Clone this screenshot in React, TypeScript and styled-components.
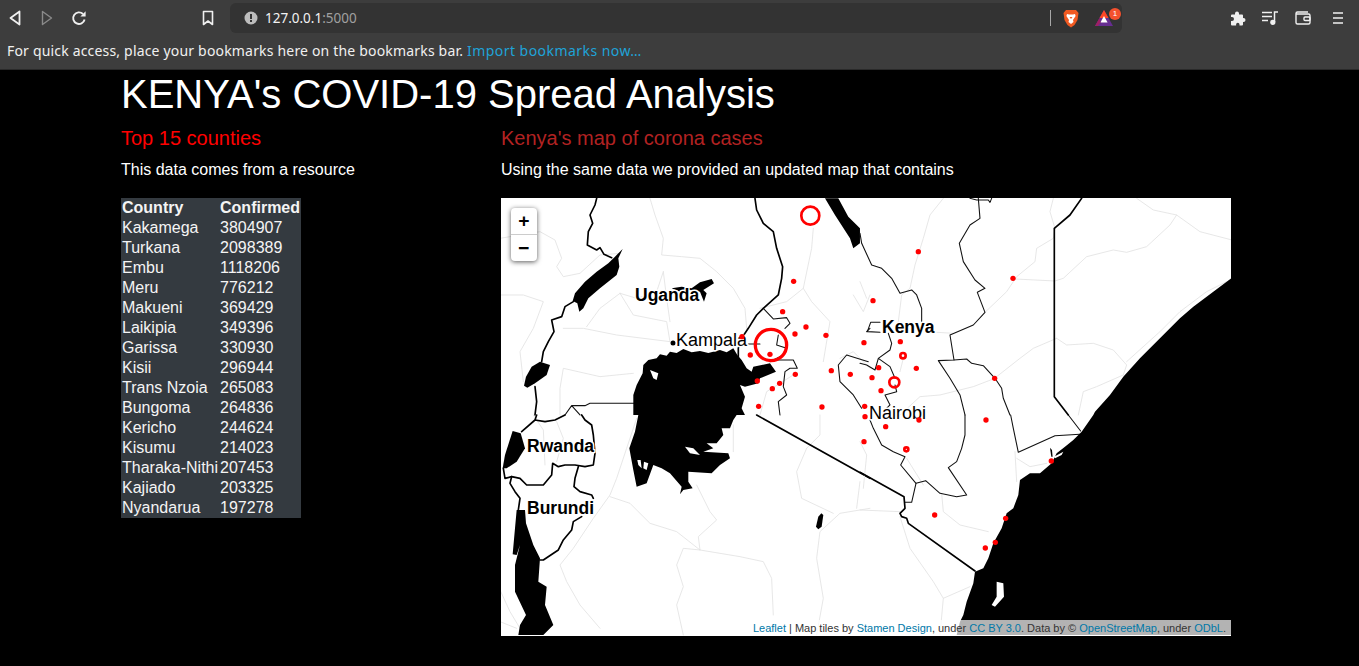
import React from 'react'
import styled, { createGlobalStyle } from 'styled-components'

const GlobalStyle = createGlobalStyle`
  html, body {
    margin: 0;
    height: 100%;
    background: #000;
    overflow: hidden;
    font-family: "Liberation Sans", Arial, sans-serif;
  }
`

const Chrome = styled.div`
  height: 69px;
  background: #3d3d3d;
  border-bottom: 1px solid #2a2a2a;
  font-family: "Noto Sans", sans-serif;
`

const Toolbar = styled.div`
  height: 36px;
  display: flex;
  align-items: center;
`

const IconSlot = styled.div<{ $width?: number; $dim?: boolean }>`
  width: ${({ $width }) => $width || 32}px;
  height: 36px;
  flex: none;
  display: flex;
  align-items: center;
  justify-content: center;
  color: ${({ $dim }) => ($dim ? '#8a8a8a' : '#f0f0f0')};
`

const NavGroup = styled.div`
  display: flex;
  width: 193px;
  margin-left: -1px;
`

const UrlBar = styled.div`
  width: 892px;
  height: 30px;
  margin: 0 100px 0 6px;
  flex: none;
  background: #333333;
  border-radius: 6px;
  display: flex;
  align-items: center;
  padding: 0 0 0 14px;
  box-sizing: border-box;
  font-size: 13.5px;
  color: #f2f2f2;
`

const UrlHost = styled.span`
  margin-left: 7px;
`

const UrlPort = styled.span`
  color: #a0a0a0;
  flex: 1;
`

const UrlDivider = styled.div`
  width: 1px;
  height: 16px;
  background: #a8a8a8;
`

const ShieldSlot = styled.div`
  width: 38px;
  padding-left: 1px;
  box-sizing: border-box;
  display: flex;
  justify-content: center;
`

const RewardSlot = styled.div`
  position: relative;
  width: 30px;
  margin-right: 3px;
  display: flex;
  justify-content: center;
`

const Badge = styled.span`
  position: absolute;
  top: -2px;
  right: -2px;
  width: 12px;
  height: 12px;
  border-radius: 50%;
  background: #f4512e;
  color: #fff;
  font-size: 8px;
  line-height: 12px;
  text-align: center;
  font-family: "Liberation Sans", sans-serif;
`

const ActionGroup = styled.div`
  display: flex;
`

const BookmarkBar = styled.div`
  height: 33px;
  padding: 0 0 4px 7px;
  box-sizing: border-box;
  display: flex;
  align-items: center;
  font-size: 14px;
  letter-spacing: 0.18px;
  color: #f0f0f0;
  white-space: nowrap;
`

const ImportLink = styled.a`
  color: #1fa3d8;
  margin-left: 4px;
  letter-spacing: 0.45px;
`

const Page = styled.div`
  width: 1117px;
  margin: 0 auto;
  color: #fff;
`

const Title = styled.h1`
  margin: 0 0 8px;
  font-size: 40px;
  line-height: 48px;
  font-weight: 400;
`

const Columns = styled.div`
  display: flex;
`

const LeftColumn = styled.section`
  width: 380px;
  flex: none;
`

const RightColumn = styled.section`
  width: 730px;
  flex: none;
`

const SectionTitle = styled.h2<{ $color: string }>`
  margin: 0 0 8px;
  font-size: 20px;
  line-height: 24px;
  font-weight: 400;
  color: ${({ $color }) => $color};
`

const Lead = styled.p`
  margin: 0 0 16px;
  font-size: 16px;
  line-height: 24px;
`

const DataTable = styled.table`
  border-collapse: collapse;
  background: #343a40;
  font-size: 16px;
  line-height: 20px;
  color: #f4f4f4;

  th, td {
    padding: 0 1px;
    text-align: left;
  }
  th {
    font-weight: 700;
  }
`

const MapBox = styled.div`
  position: relative;
  width: 730px;
  height: 438px;
  background: #fff;
  overflow: hidden;
`

const MapDrawing = styled.svg`
  display: block;
  width: 730px;
  height: 438px;
`

const ZoomControl = styled.div`
  position: absolute;
  left: 10px;
  top: 10px;
  width: 26px;
  border-radius: 4px;
  background: #fff;
  box-shadow: 0 1px 5px rgba(0, 0, 0, 0.65);
`

const ZoomButton = styled.div<{ $first?: boolean }>`
  height: 26px;
  text-align: center;
  font: 700 18px/26px "DejaVu Sans Mono", "Liberation Mono", monospace;
  color: #000;
  border-bottom: ${({ $first }) => ($first ? '1px solid #ccc' : 'none')};
`

const Attribution = styled.div`
  position: absolute;
  right: 0;
  bottom: 0;
  padding: 0 5px;
  background: rgba(255, 255, 255, 0.7);
  font-size: 11px;
  line-height: 16px;
  color: #333;
  white-space: nowrap;

  a {
    color: #0078a8;
  }
`

const Label = styled.text<{ $bold?: boolean }>`
  font-family: "Liberation Sans", sans-serif;
  font-size: ${({ $bold }) => ($bold ? 17.5 : 18)}px;
  font-weight: ${({ $bold }) => ($bold ? 700 : 400)};
  fill: #000;
  stroke: #fff;
  stroke-width: 3px;
  stroke-linejoin: round;
  paint-order: stroke;
`

const counties: [string, number][] = [
  ['Kakamega', 3804907],
  ['Turkana', 2098389],
  ['Embu', 1118206],
  ['Meru', 776212],
  ['Makueni', 369429],
  ['Laikipia', 349396],
  ['Garissa', 330930],
  ['Kisii', 296944],
  ['Trans Nzoia', 265083],
  ['Bungoma', 264836],
  ['Kericho', 244624],
  ['Kisumu', 214023],
  ['Tharaka-Nithi', 207453],
  ['Kajiado', 203325],
  ['Nyandarua', 197278],
]

// all map paths are traced per quadrant, in units of a third of a pixel
const nw = 'translate(-1 -3) scale(0.3333)'
const ne = 'translate(359 -3) scale(0.3333)'
const sw = 'translate(-1 217) scale(0.3333)'
const se = 'translate(359 217) scale(0.3333)'

const quadrants = [
  {
    transform: nw,
    rivers: [
      'M0 130L60 120 120 110 165 135 185 190 170 215 190 245 240 235 300 180 360 175',
      'M450 10L465 60 490 130 485 180 545 185 600 190 650 230 700 280 735 340 740 400',
      'M0 300L70 300 130 320 100 400 60 470 70 560',
      'M360 295L410 310 470 290 490 230M360 295L400 360 500 380 510 440M190 400L250 400 350 420 510 440M260 395L300 340 360 295',
      'M510 380L500 310 490 230M940 100L935 160 910 280 935 320 990 380 970 500M780 340L860 320 910 280',
      'M180 660L180 580 190 520 300 545 400 535M1060 300L1090 350 1110 300M1020 490L1060 470 1110 520M880 540L800 590 780 660',
    ],
    thin: [
      'M790 340L820 372 860 368 870 385 855 400M745 447L780 447M835 420L830 450 860 460 850 480 810 500',
      'M830 495L880 495 892 520 870 520 855 530 850 575 860 600 835 620 840 660',
      'M1110 400L1100 410M1105 500L1040 480 1015 510 1020 560 1060 600 1085 640',
      'M195 660L215 632 255 632 270 625 410 625M215 632L240 660',
    ],
    thick: [
      'M290 10L285 30 270 60 278 85 265 110 262 150 290 165 300 158 312 178 335 188',
      'M220 320L195 335 185 365 155 375 162 410 145 440 130 470 125 500M105 575L110 620 105 660',
      'M765 10L770 45 790 85 820 110 830 160 848 215 845 250 835 300 790 340 770 360 745 400 725 430 715 460 715 490',
    ],
    water: [
      'M368 162L345 185 325 205 290 230 255 260 225 295 218 318 232 325 238 350 250 340 265 310 300 280 350 240 358 215 355 190Z',
      'M150 510L120 500 95 515 78 545 72 572 82 578 105 565 140 540Z',
      'M515 280L545 275 575 280 600 262 635 252 642 265 610 285 620 295 612 320 600 290 570 285 540 290Z',
      'M430 510L445 495 470 490 480 478 500 482 510 470 530 474 550 462 575 472 600 468 625 474 660 465 680 472 700 460 712 480 725 495 740 520 755 530 760 515 810 505 828 530 780 550 775 565 735 575 720 570 735 605 725 640 735 660L400 660 400 600 410 570 428 535Z',
      'M975 10L1015 10 1045 65 1080 100 1080 145 1060 160 1050 130 1005 60Z',
    ],
    land: ['M450 525L475 535 470 555 460 550Z'],
  },
  {
    transform: ne,
    rivers: [
      'M250 10L210 60 190 130 165 210 150 280 125 300 115 380M580 10L570 50 585 100',
      'M585 100L580 130 530 160 525 200 470 245 440 290 375 352M465 252L585 258 610 250 680 185 760 165 800 172 860 155 930 90 950 60 1020 110 1116 135M950 60L880 45 830 10',
      'M280 415L230 412M590 430L620 450 700 445 760 465 800 510 790 540M590 430L520 460 480 490 410 545',
      'M405 550L340 575 240 600 180 605 120 660M1100 260L1040 290 960 350 900 410 800 500M790 540L710 575 670 590 655 660M130 490L120 530M0 260L20 310',
    ],
    thin: [
      'M355 10L360 70 330 90 298 145 310 200 345 255 375 280 352 292 375 352 340 390 270 420 282 495',
      'M330 10L350 15 385 15 390 22 395 10',
      'M0 115L5 145 35 210 65 220 95 250 120 295 155 285 170 300 185 340 185 380',
      'M60 382L32 382 22 410 60 412M85 415L95 445 90 465 55 490 90 515 105 550M55 490L45 525 20 510 0 505',
      'M235 497L282 495 320 492 335 505 370 512 405 550 425 580 430 610 450 660M235 497L270 550 300 600 315 660',
      'M105 570L110 590 75 600 90 630 70 650',
    ],
    thick: ['M665 10L630 60 583 100 583 605 625 660'],
    water: ['M1116 248L1060 290 1000 335 960 370 900 430 840 490 790 545 750 600 705 650 700 660L1116 660Z'],
    land: [],
  },
  {
    transform: sw,
    rivers: [
      'M100 0L130 45 135 150M170 20L190 70 170 140M410 10L380 100 350 190 330 240 280 310 220 400 180 450 200 500 240 570 300 640',
      'M330 245L390 265 450 325 530 350 600 405 595 365 650 315 630 290 590 210M600 405L720 425 790 440 815 490 820 600',
      'M600 405L550 400 530 450 550 515 530 570 550 660M950 660L970 550 950 430 960 350 1020 295 1110 280M920 100L890 170 905 250 1000 295',
      'M1080 200L1070 280M0 525L30 590 60 640M700 30L700 110M0 620L50 640M960 0L960 60 920 100',
    ],
    thin: [],
    thick: [
      'M105 15L65 50M110 0L105 15 135 20 165 15 195 0M245 0L255 15 275 30 280 60 285 115 280 150 255 155 225 150 195 150 175 155 158 145 155 180 130 210 80 210 60 190 35 185 15 190 10 160',
      'M35 185L30 205 45 230 60 250 55 285M235 155L225 190 222 215 240 230 275 240 280 250M245 305L220 320 215 345 190 375 175 405 130 435 120 435',
      'M770 0L1110 190',
    ],
    water: [
      'M38 48L62 55 75 100 50 140 20 160 8 160 15 120Z',
      'M50 285L75 285 78 325 100 390 120 430 115 500 140 515 135 570 160 630 130 660 55 660 60 630 78 600 45 530 45 450 60 390 50 420 38 418 45 340Z',
      'M415 0L710 0 700 15 690 40 665 40 670 60 650 85 620 85 640 100 610 110 685 115 690 130 660 150 635 175 565 170 565 200 578 220 550 225 540 238 545 215 510 175 485 160 460 150 440 205 410 215 400 165 388 100 405 50Z',
      'M964 295L970 300 965 335 955 343 948 335 955 305Z',
    ],
    land: ['M555 95L580 100 600 120 570 115Z', 'M412 135L422 135 425 160 415 150Z', 'M432 140L445 145 440 165 430 160Z'],
  },
  {
    transform: se,
    rivers: [
      'M0 80L20 120 10 220M140 130L190 210M0 285L120 290M245 235L250 290 300 330 385 350M465 110L470 200M470 130L510 155 560 145',
      'M120 305L150 400 220 500 250 550 240 660M250 550L330 515',
    ],
    thin: [
      'M30 15L40 40 65 90 100 110 135 125 122 150 168 205 155 262 135 262',
      'M168 205L197 197 240 235 290 245 320 240 265 158 290 140 305 100 315 60 315 0',
      'M452 0L460 40 475 112 585 62 660 58M625 0L662 48',
    ],
    thick: ['M0 172L132 245 135 280 120 295 125 305 140 310 145 325 345 468'],
    water: [
      'M700 0L665 50 640 75 615 95 590 115 575 145 540 175 510 175 480 195 475 240 460 280 440 295 425 340 400 385 385 430 370 460 345 470 340 505 320 560 310 600 300 620 290 660L1116 660 1116 0Z',
      'M570 98L576 105 578 125 574 125Z',
    ],
    land: ['M410 500L430 505 432 545 405 575 395 570 410 545Z', 'M582 125L610 110 605 120 585 130Z'],
  },
]

const markers: { transform: string; dots: [number, number][] }[] = [
  {
    transform: nw,
    dots: [
      [881, 259], [848, 350], [918, 396], [885, 417], [978, 421], [1092, 443], [726, 425], [751, 480], [810, 478],
      [994, 527], [1051, 538], [886, 538], [772, 558], [839, 565], [817, 581], [776, 634], [966, 636],
    ],
  },
  {
    transform: ne,
    dots: [[175, 170], [459, 250], [39, 317], [121, 440], [169, 520], [56, 518], [36, 548], [63, 587], [14, 634], [404, 550]],
  },
  {
    transform: se,
    dots: [[15, 5], [77, 35], [177, 15], [378, 15], [12, 80], [574, 138], [437, 310], [406, 382], [376, 399], [224, 300]],
  },
]

function MapLayer({ part }: { part: (typeof quadrants)[number] }) {
  return (
    <g transform={part.transform} fill="none" strokeLinejoin="round" strokeLinecap="round">
      {part.rivers.map((d) => (
        <path key={d} d={d} stroke="#e2e2e2" strokeWidth={2.5} />
      ))}
      {part.thin.map((d) => (
        <path key={d} d={d} stroke="#111" strokeWidth={3.2} />
      ))}
      {part.thick.map((d) => (
        <path key={d} d={d} stroke="#000" strokeWidth={5} />
      ))}
      {part.water.map((d) => (
        <path key={d} d={d} fill="#000" />
      ))}
      {part.land.map((d) => (
        <path key={d} d={d} fill="#fff" />
      ))}
    </g>
  )
}

function KenyaMap() {
  return (
    <MapBox>
      <MapDrawing viewBox="0 0 730 438">
        {quadrants.map((part) => (
          <MapLayer key={part.transform} part={part} />
        ))}
        <circle cx={172} cy={145} r={2.5} fill="#000" />
        <Label $bold x={134} y={103}>Uganda</Label>
        <Label x={175} y={148}>Kampala</Label>
        <Label $bold x={381} y={135}>Kenya</Label>
        <Label x={368} y={221}>Nairobi</Label>
        <Label $bold x={26} y={254}>Rwanda</Label>
        <Label $bold x={26} y={316}>Burundi</Label>
        {markers.map((group) => (
          <g key={group.transform} transform={group.transform} fill="#ff0000">
            {group.dots.map(([x, y]) => (
              <circle key={`${x}-${y}`} cx={x} cy={y} r={8} />
            ))}
          </g>
        ))}
        <g transform={nw} fill="none" stroke="#ff0000">
          <circle cx={931} cy={62} r={27} strokeWidth={8} />
          <circle cx={813} cy={450} r={47} strokeWidth={10} />
        </g>
        <g transform={ne} fill="none" stroke="#ff0000">
          <circle cx={129} cy={482} r={8} strokeWidth={8} />
          <circle cx={103} cy={562} r={15} strokeWidth={8} />
        </g>
        <g transform={se} fill="none" stroke="#ff0000">
          <circle cx={139} cy={103} r={6} strokeWidth={8} />
        </g>
      </MapDrawing>
      <ZoomControl>
        <ZoomButton $first>+</ZoomButton>
        <ZoomButton>−</ZoomButton>
      </ZoomControl>
      <Attribution>
        <a>Leaflet</a> | Map tiles by <a>Stamen Design</a>, under <a>CC BY 3.0</a>. Data by © <a>OpenStreetMap</a>, under{' '}
        <a>ODbL</a>.
      </Attribution>
    </MapBox>
  )
}

function BrowserChrome() {
  return (
    <Chrome>
      <Toolbar>
        <NavGroup>
          <IconSlot>
            <svg width="12" height="16" viewBox="0 0 12 16" fill="none" stroke="currentColor" strokeWidth="1.8" strokeLinejoin="round">
              <path d="M10.5 1.5L1.5 8l9 6.5z" />
            </svg>
          </IconSlot>
          <IconSlot $dim>
            <svg width="12" height="16" viewBox="0 0 12 16" fill="none" stroke="currentColor" strokeWidth="1.4" strokeLinejoin="round">
              <path d="M1.5 1.5l9 6.5-9 6.5z" />
            </svg>
          </IconSlot>
          <IconSlot>
            <svg width="16" height="16" viewBox="0 0 16 16" fill="none" stroke="currentColor" strokeWidth="1.9">
              <path d="M13.6 9.5A5.8 5.8 0 1 1 12 4" />
              <path d="M14.6 1.2v5.2H9.4z" fill="currentColor" stroke="none" />
            </svg>
          </IconSlot>
        </NavGroup>
        <IconSlot>
          <svg width="12" height="16" viewBox="0 0 12 16" fill="none" stroke="currentColor" strokeWidth="1.6" strokeLinejoin="round">
            <path d="M1.5 1.5h9v13L6 11l-4.5 3.5z" />
          </svg>
        </IconSlot>
        <UrlBar>
          <svg width="14" height="14" viewBox="0 0 14 14">
            <circle cx="7" cy="7" r="6.5" fill="#bdbdbd" />
            <rect x="6" y="3" width="2" height="5" fill="#333" />
            <rect x="6" y="9" width="2" height="2" fill="#333" />
          </svg>
          <UrlHost>127.0.0.1</UrlHost>
          <UrlPort>:5000</UrlPort>
          <UrlDivider />
          <ShieldSlot>
            <svg width="16" height="19" viewBox="0 0 16 19">
              <path d="M3 1h10l2.5 3-1 7-3 5L8 18.500 4.500 16l-3-5-1-7z" fill="#f15a22" />
              <path d="M4 5l2 .6h4L12 5l.6 2-2.600 4 .5 2L8 15l-2.500-2 .5-2-2.600-4z" fill="#fff" />
              <path d="M6.500 8h3L8 10z" fill="#f15a22" />
            </svg>
          </ShieldSlot>
          <RewardSlot>
            <svg width="18" height="16" viewBox="0 0 18 16">
              <path d="M9 0l9 16H0z" fill="#662d91" />
              <path d="M9 0l4.500 8h-9z" fill="#ff4724" />
              <path d="M9 6l3.600 6.500H5.400z" fill="#fff" />
              <path d="M0 16l4.500-8 1 4.500L3 16z" fill="#9e1f63" />
            </svg>
            <Badge>1</Badge>
          </RewardSlot>
        </UrlBar>
        <ActionGroup>
          <IconSlot>
            <svg width="15" height="15" viewBox="0 0 15 15" fill="currentColor">
              <path d="M6 .5a2 2 0 0 1 2 2v1h3a1 1 0 0 1 1 1V7h.5a2 2 0 0 1 0 4H12v2.500a1 1 0 0 1-1 1H8.500v-1a1.700 1.700 0 0 0-3.400 0v1H1a1 1 0 0 1-1-1V10h1a2 2 0 0 0 0-4H0V4.500a1 1 0 0 1 1-1h3v-1a2 2 0 0 1 2-2z" />
            </svg>
          </IconSlot>
          <IconSlot>
            <svg width="17" height="14" viewBox="0 0 17 14" fill="none" stroke="currentColor" strokeWidth="1.5">
              <path d="M0 1.500h10M0 5.500h10M0 9.500h6" />
              <path d="M12.500 11V1h3.500" />
              <circle cx="10.800" cy="11.300" r="1.900" fill="currentColor" />
            </svg>
          </IconSlot>
          <IconSlot $width={34}>
            <svg width="16" height="14" viewBox="0 0 16 14" fill="none" stroke="currentColor" strokeWidth="1.4">
              <path d="M13 1H2.500A1.500 1.500 0 0 0 1 2.500v9A1.500 1.500 0 0 0 2.500 13h11a1.500 1.500 0 0 0 1.500-1.500V4.500A1.500 1.500 0 0 0 13.500 3H1" />
              <rect x="9" y="6" width="6" height="3.500" rx="1" />
            </svg>
          </IconSlot>
          <IconSlot $width={36}>
            <svg width="10" height="12" viewBox="0 0 10 12" fill="none" stroke="currentColor" strokeWidth="1.5">
              <path d="M0 1h10M0 6h10M0 11h10" />
            </svg>
          </IconSlot>
        </ActionGroup>
      </Toolbar>
      <BookmarkBar>
        For quick access, place your bookmarks here on the bookmarks bar.
        <ImportLink>Import bookmarks now…</ImportLink>
      </BookmarkBar>
    </Chrome>
  )
}

export default function App() {
  return (
    <>
      <GlobalStyle />
      <BrowserChrome />
      <Page>
        <Title>KENYA's COVID-19 Spread Analysis</Title>
        <Columns>
          <LeftColumn>
            <SectionTitle $color="#ff0000">Top 15 counties</SectionTitle>
            <Lead>This data comes from a resource</Lead>
            <DataTable>
              <thead>
                <tr>
                  <th>Country</th>
                  <th>Confirmed</th>
                </tr>
              </thead>
              <tbody>
                {counties.map(([name, cases]) => (
                  <tr key={name}>
                    <td>{name}</td>
                    <td>{cases}</td>
                  </tr>
                ))}
              </tbody>
            </DataTable>
          </LeftColumn>
          <RightColumn>
            <SectionTitle $color="#b22222">Kenya's map of corona cases</SectionTitle>
            <Lead>Using the same data we provided an updated map that contains</Lead>
            <KenyaMap />
          </RightColumn>
        </Columns>
      </Page>
    </>
  )
}
